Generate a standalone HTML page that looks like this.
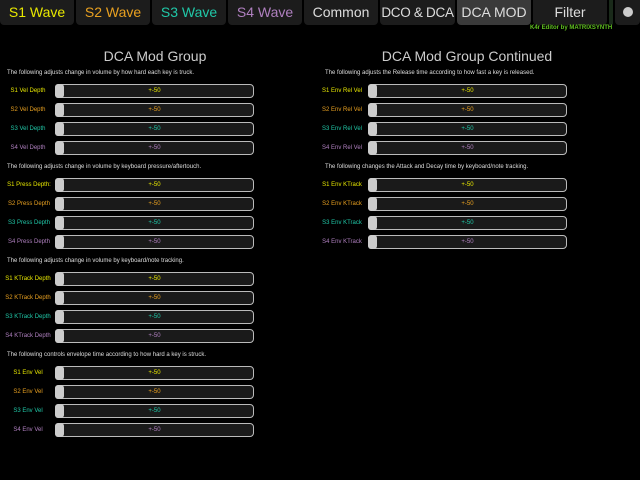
<!DOCTYPE html>
<html><head><meta charset="utf-8"><style>
body{margin:0;width:640px;height:480px;background:#000;overflow:hidden;font-family:"Liberation Sans",sans-serif;position:relative}
.tab{position:absolute;top:0;height:25px;background:#1c1c1c;border-radius:0 0 4px 4px;font-size:14px;line-height:25px;text-align:center;color:#ddd;white-space:nowrap;overflow:hidden}
.h{position:absolute;font-size:14px;color:#ccc;text-align:center}
.d{position:absolute;font-size:6px;color:#ddd;white-space:nowrap}
.l{position:absolute;font-size:6px;text-align:center;white-space:nowrap;line-height:14px}
.s{position:absolute;height:12px;border:1px solid #bbb;border-radius:4px;background:#1a1a1a;font-size:6px;line-height:12px;text-align:center}
.s:before{content:"";position:absolute;left:-1px;top:-1px;width:9px;height:14px;background:#ccc;border-radius:3px}
.c1{color:#e8e800}.c2{color:#e8a020}.c3{color:#20c8a8}.c4{color:#b080c0}
</style></head><body>
<div class="tab c1" style="left:0;width:74px">S1 Wave</div>
<div class="tab c2" style="left:76px;width:74px">S2 Wave</div>
<div class="tab c3" style="left:152px;width:74px">S3 Wave</div>
<div class="tab c4" style="left:228px;width:74px">S4 Wave</div>
<div class="tab" style="left:304px;width:74px">Common</div>
<div class="tab" style="left:380px;width:75px;font-size:13.5px;letter-spacing:-0.3px">DCO &amp; DCA</div>
<div class="tab" style="left:457px;width:74px;background:#3a3a3a">DCA MOD</div>
<div class="tab" style="left:533px;width:74px">Filter</div>
<div class="tab" style="left:609px;width:4px;background:#1a2a1a"></div>
<div class="tab" style="left:615px;width:25px"><span style="display:inline-block;width:10px;height:10px;border-radius:50%;background:#ccc;vertical-align:middle;margin-top:-2px"></span></div>
<div class="d" style="left:530px;top:25px;color:#60c020;font-weight:bold">K4r Editor by MATRIXSYNTH</div>
<div class="h" style="left:55px;width:200px;top:48px">DCA Mod Group</div>
<div class="h" style="left:367px;width:200px;top:48px">DCA Mod Group Continued</div>

<div class="d" style="left:7px;top:70px">The following adjusts change in volume by how hard each key is truck.</div>
<div class="d" style="left:7px;top:164px">The following adjusts change in volume by keyboard pressure/aftertouch.</div>
<div class="d" style="left:7px;top:258px">The following adjusts change in volume by keyboard/note tracking.</div>
<div class="d" style="left:7px;top:352px">The following controls envelope time according to how hard a key is struck.</div>
<div class="d" style="left:325px;top:70px">The following adjusts the Release time according to how fast a key is released.</div>
<div class="d" style="left:325px;top:164px">The following changes the Attack and Decay time by keyboard/note tracking.</div>

<div class="l c1" style="left:0;width:56px;top:84px">S1 Vel Depth</div><div class="s c1" style="left:55px;width:197px;top:84px">+-50</div>
<div class="l c2" style="left:0;width:56px;top:103px">S2 Vel Depth</div><div class="s c2" style="left:55px;width:197px;top:103px">+-50</div>
<div class="l c3" style="left:0;width:56px;top:122px">S3 Vel Depth</div><div class="s c3" style="left:55px;width:197px;top:122px">+-50</div>
<div class="l c4" style="left:0;width:56px;top:141px">S4 Vel Depth</div><div class="s c4" style="left:55px;width:197px;top:141px">+-50</div>

<div class="l c1" style="left:0;width:58px;top:178px">S1 Press Depth:</div><div class="s c1" style="left:55px;width:197px;top:178px">+-50</div>
<div class="l c2" style="left:0;width:58px;top:197px">S2 Press Depth</div><div class="s c2" style="left:55px;width:197px;top:197px">+-50</div>
<div class="l c3" style="left:0;width:58px;top:216px">S3 Press Depth</div><div class="s c3" style="left:55px;width:197px;top:216px">+-50</div>
<div class="l c4" style="left:0;width:58px;top:235px">S4 Press Depth</div><div class="s c4" style="left:55px;width:197px;top:235px">+-50</div>

<div class="l c1" style="left:0;width:56px;top:272px">S1 KTrack Depth</div><div class="s c1" style="left:55px;width:197px;top:272px">+-50</div>
<div class="l c2" style="left:0;width:56px;top:291px">S2 KTrack Depth</div><div class="s c2" style="left:55px;width:197px;top:291px">+-50</div>
<div class="l c3" style="left:0;width:56px;top:310px">S3 KTrack Depth</div><div class="s c3" style="left:55px;width:197px;top:310px">+-50</div>
<div class="l c4" style="left:0;width:56px;top:329px">S4 KTrack Depth</div><div class="s c4" style="left:55px;width:197px;top:329px">+-50</div>

<div class="l c1" style="left:0;width:56px;top:366px">S1 Env Vel</div><div class="s c1" style="left:55px;width:197px;top:366px">+-50</div>
<div class="l c2" style="left:0;width:56px;top:385px">S2 Env Vel</div><div class="s c2" style="left:55px;width:197px;top:385px">+-50</div>
<div class="l c3" style="left:0;width:56px;top:404px">S3 Env Vel</div><div class="s c3" style="left:55px;width:197px;top:404px">+-50</div>
<div class="l c4" style="left:0;width:56px;top:423px">S4 Env Vel</div><div class="s c4" style="left:55px;width:197px;top:423px">+-50</div>

<div class="l c1" style="left:318px;width:48px;top:84px">S1 Env Rel Vel</div><div class="s c1" style="left:368px;width:197px;top:84px">+-50</div>
<div class="l c2" style="left:318px;width:48px;top:103px">S2 Env Rel Vel</div><div class="s c2" style="left:368px;width:197px;top:103px">+-50</div>
<div class="l c3" style="left:318px;width:48px;top:122px">S3 Env Rel Vel</div><div class="s c3" style="left:368px;width:197px;top:122px">+-50</div>
<div class="l c4" style="left:318px;width:48px;top:141px">S4 Env Rel Vel</div><div class="s c4" style="left:368px;width:197px;top:141px">+-50</div>

<div class="l c1" style="left:318px;width:48px;top:178px">S1 Env KTrack</div><div class="s c1" style="left:368px;width:197px;top:178px">+-50</div>
<div class="l c2" style="left:318px;width:48px;top:197px">S2 Env KTrack</div><div class="s c2" style="left:368px;width:197px;top:197px">+-50</div>
<div class="l c3" style="left:318px;width:48px;top:216px">S3 Env KTrack</div><div class="s c3" style="left:368px;width:197px;top:216px">+-50</div>
<div class="l c4" style="left:318px;width:48px;top:235px">S4 Env KTrack</div><div class="s c4" style="left:368px;width:197px;top:235px">+-50</div>
</body></html>
